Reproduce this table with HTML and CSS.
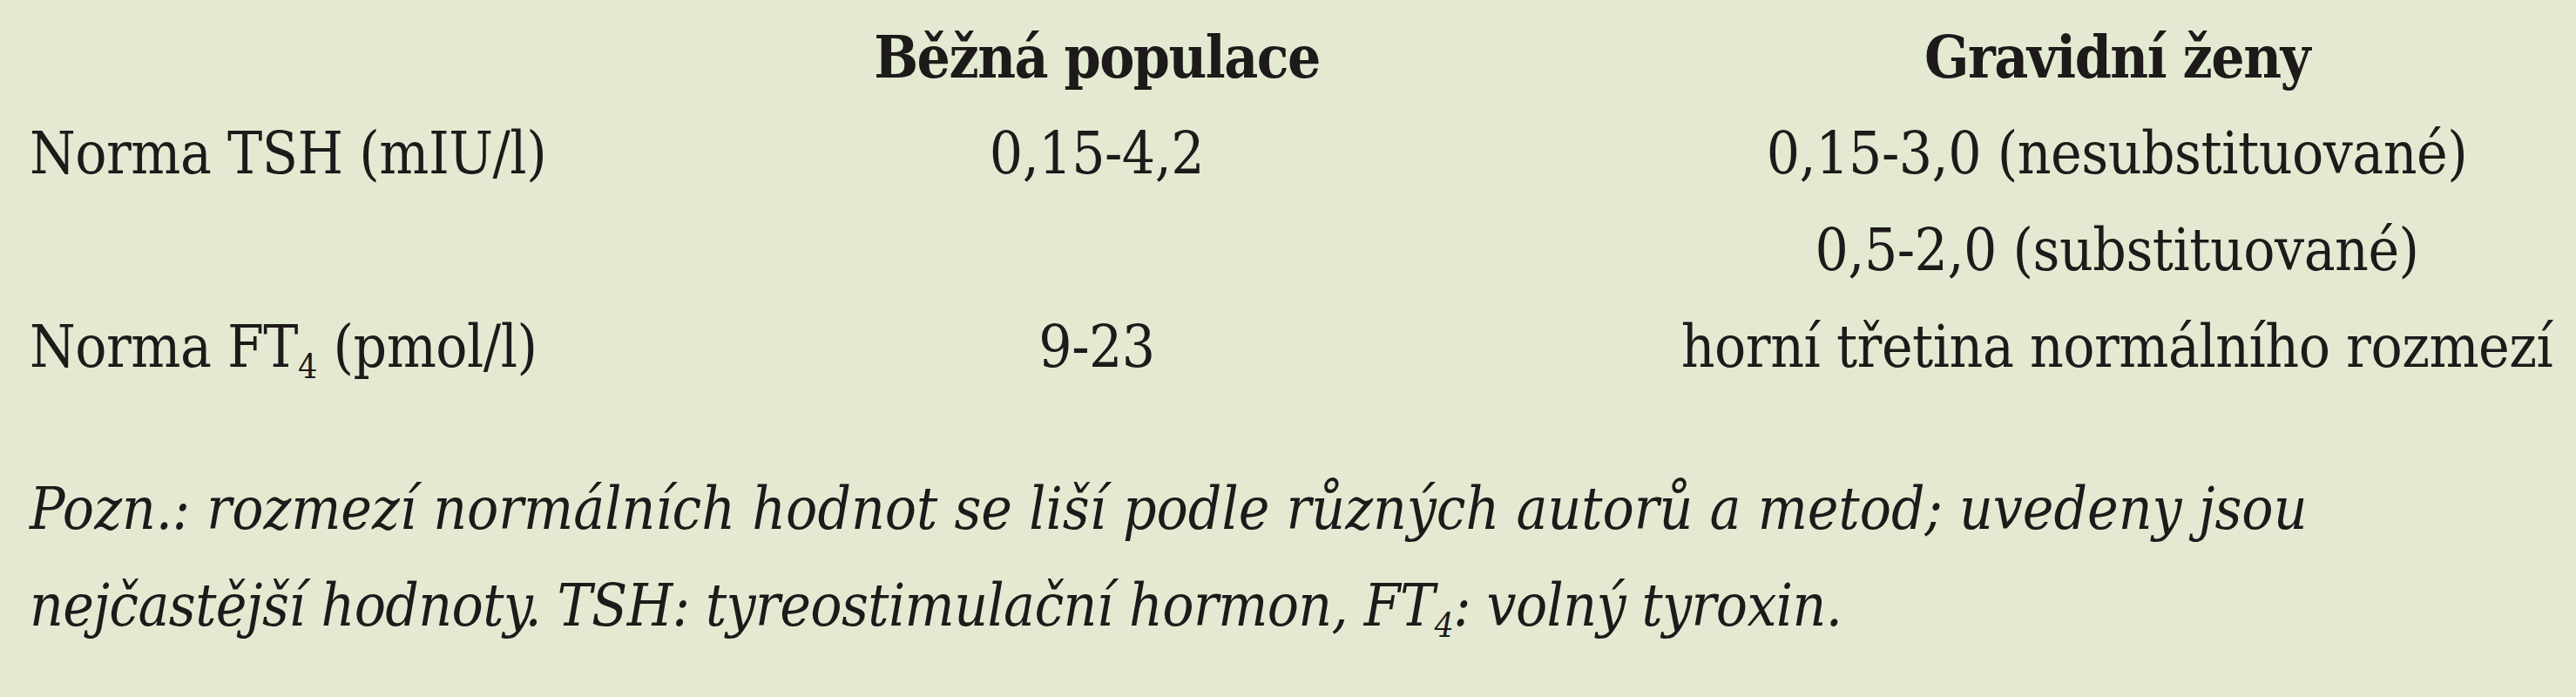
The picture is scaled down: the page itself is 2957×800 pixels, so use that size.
FILE: index.html
```html
<!DOCTYPE html>
<html lang="cs">
<head>
<meta charset="utf-8">
<title>Normy TSH a FT4</title>
<link rel="stylesheet" href="styles.css">
</head>
<body>
<div class="page">
  <div class="table">
    <div class="cell c1 head"></div>
    <div class="cell c2 head">Běžná populace</div>
    <div class="cell c3 head">Gravidní ženy</div>

    <div class="cell c1">Norma TSH (mIU/l)</div>
    <div class="cell c2">0,15-4,2</div>
    <div class="cell c3">0,15-3,0 (nesubstituované)</div>

    <div class="cell c1"></div>
    <div class="cell c2"></div>
    <div class="cell c3">0,5-2,0 (substituované)</div>

    <div class="cell c1">Norma FT<sub class="sub">4</sub> (pmol/l)</div>
    <div class="cell c2">9-23</div>
    <div class="cell c3">horní třetina normálního rozmezí</div>
  </div>
  <p class="note">Pozn.: rozmezí normálních hodnot se liší podle různých autorů a metod; uvedeny jsou<br><span class="tight">nejčastější hodnoty. TSH: tyreostimulační hormon, FT<sub class="sub">4</sub>: volný tyroxin.</span></p>
</div>
</body>
</html>
```
FILE: styles.css
```css
html, body {
  margin: 0;
  padding: 0;
  background: #e4ead2;
}
.page {
  width: 2957px;
  height: 800px;
  box-sizing: border-box;
  padding: 10px 0 0 34px;
  background: #e4ead2;
  color: #1e1a1a;
  font-family: "DejaVu Serif", "Liberation Serif", serif;
  font-stretch: condensed;
  font-size: 67px;
  line-height: 111px;
  overflow: hidden;
}
.table {
  display: grid;
  grid-template-columns: 640px 1170px 1113px;
  letter-spacing: -0.5px;
}
.cell {
  white-space: nowrap;
  height: 111px;
}
.c1 { text-align: left; }
.c2 { text-align: center; }
.c3 { text-align: center; padding-left: 59px; }
.head {
  font-weight: bold;
  letter-spacing: -1.5px;
}
.sub {
  font-size: 39px;
  line-height: 0;
  vertical-align: -13px;
}
.note {
  margin: 75px 0 0 0;
  font-style: italic;
  white-space: nowrap;
}
.tight {
  letter-spacing: -0.6px;
}
```
